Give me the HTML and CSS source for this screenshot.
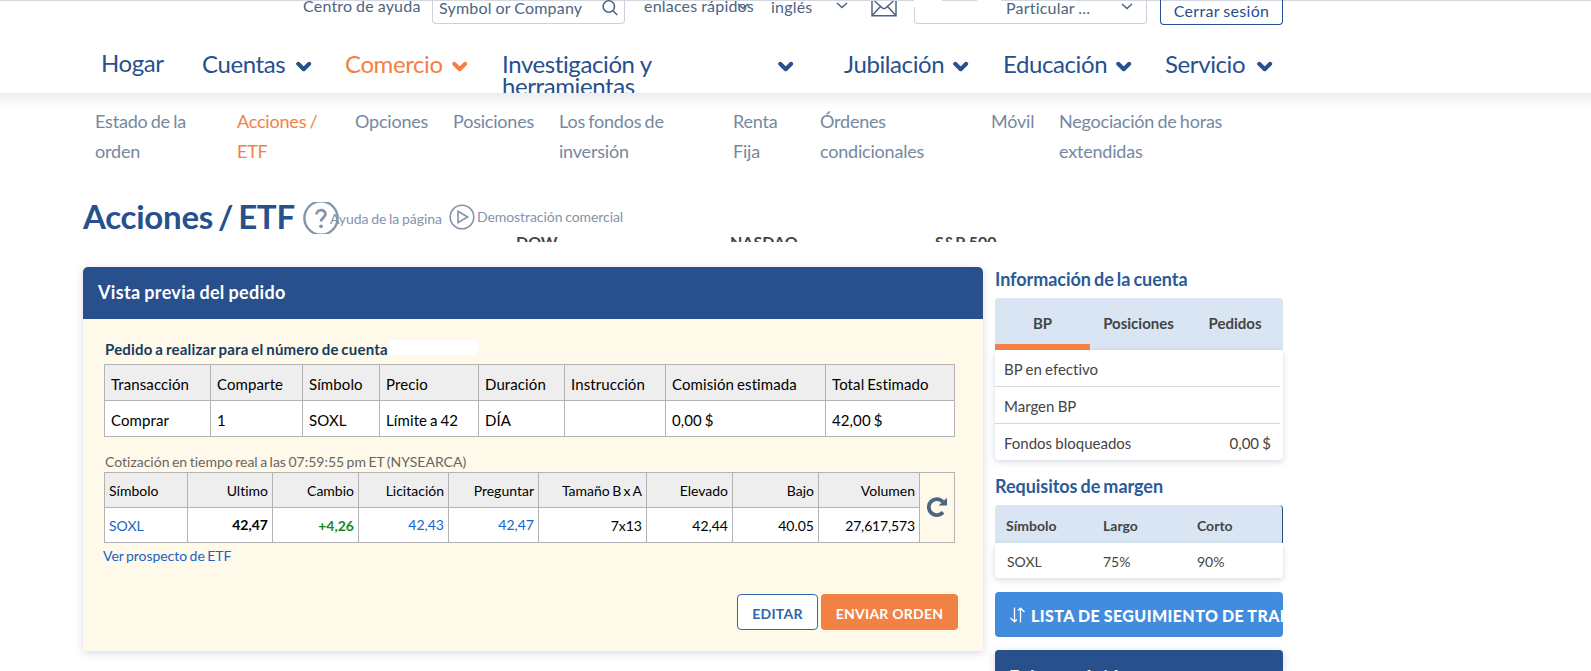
FILE: index.html
```html
<!DOCTYPE html>
<html lang="es">
<head>
    <meta charset="UTF-8">
    <meta name="viewport" content="width=device-width, initial-scale=1.0">
    <title>Acciones / ETF</title>
    <link rel="stylesheet" href="styles.css">
</head>
<body>
    <svg class="sprite">
        <symbol id="chevron" viewBox="0 0 16 11"><path d="M2.2 2.8 L7.7 8.2 L13.2 2.8" fill="none" stroke="currentColor" stroke-width="4" stroke-linecap="round" stroke-linejoin="round"/></symbol>
        <symbol id="chevron-thin" viewBox="0 0 12 7"><path d="M1 1 L6 5.6 L11 1" fill="none" stroke="currentColor" stroke-width="1.5"/></symbol>
    </svg>

    <header class="header">
        <div class="topbar">
            <a class="help-center">Centro de ayuda</a>
            <div class="search">
                <span>Symbol or Company</span>
                <svg class="icon-search" viewBox="0 0 16 16"><circle cx="6.8" cy="6.5" r="5.7"/><path d="M11 10.8 L15.2 15"/></svg>
            </div>
            <a class="quick">enlaces rápidos<svg class="thin quick-arrow"><use href="#chevron-thin"/></svg></a>
            <a class="lang">inglés</a>
            <svg class="thin lang-arrow"><use href="#chevron-thin"/></svg>
            <svg class="icon-mail" viewBox="0 0 26 17"><path d="M1 0 V14.8 H25 V0 M3.5 0 L12 7.5 H14 L22.5 0 M1 14.8 L9.5 5.5 M25 14.8 L16.5 5.5"/></svg>
            <div class="account">
                <span>Particular ...</span>
                <svg class="thin"><use href="#chevron-thin"/></svg>
            </div>
            <a class="logout">Cerrar sesión</a>
        </div>
        <nav class="nav">
            <a class="nav-home">Hogar</a>
            <a class="nav-accounts">Cuentas <svg><use href="#chevron"/></svg></a>
            <a class="nav-trade active">Comercio <svg><use href="#chevron"/></svg></a>
            <a class="nav-research"><span>Investigación y herramientas</span> <svg><use href="#chevron"/></svg></a>
            <a class="nav-retire">Jubilación <svg><use href="#chevron"/></svg></a>
            <a class="nav-edu">Educación <svg><use href="#chevron"/></svg></a>
            <a class="nav-service">Servicio <svg><use href="#chevron"/></svg></a>
        </nav>
    </header>

    <nav class="subnav">
        <a>Estado de la orden</a>
        <a class="active">Acciones / ETF</a>
        <a>Opciones</a>
        <a>Posiciones</a>
        <a>Los fondos de inversión</a>
        <a>Renta Fija</a>
        <a>Órdenes condicionales</a>
        <a>Móvil</a>
        <a>Negociación de horas extendidas</a>
    </nav>

    <div class="page-title">
        <h1>Acciones / ETF</h1>
        <svg class="icon-help" viewBox="0 0 36 32"><circle cx="18" cy="16" r="16.6" stroke-width="2.4"/><path d="M13.6 12.6 C13.6 6.6 22.4 6.8 22.4 12.2 C22.4 15.6 18 15.6 18 19.6" stroke-width="2.8"/><circle class="dot" cx="18" cy="24.3" r="1.9"/></svg>
        <a class="page-help">Ayuda de la página</a>
        <svg class="icon-play" viewBox="0 0 26 26"><circle cx="13" cy="13" r="11.8"/><path d="M9 7.3 L18.6 13 L9 18.7 Z"/></svg>
        <a class="page-demo">Demostración comercial</a>
    </div>
    <div class="ticker">
        <span>DOW</span>
        <span>NASDAQ</span>
        <span>S&amp;P 500</span>
    </div>

    <div class="content">
        <main class="panel">
            <h2>Vista previa del pedido</h2>
            <div class="panel-body">
                <p class="order-label">Pedido a realizar para el número de cuenta<span class="redacted"></span></p>
                <table class="order">
                    <colgroup><col class="w106"><col class="w92"><col class="w77"><col class="w99"><col class="w86"><col class="w101"><col class="w160"><col class="w129"></colgroup>
                    <tr><th>Transacción</th><th>Comparte</th><th>Símbolo</th><th>Precio</th><th>Duración</th><th>Instrucción</th><th>Comisión estimada</th><th>Total Estimado</th></tr>
                    <tr><td>Comprar</td><td>1</td><td>SOXL</td><td>Límite a 42</td><td>DÍA</td><td></td><td>0,00 $</td><td>42,00 $</td></tr>
                </table>
                <p class="quote-time">Cotización en tiempo real a las 07:59:55 pm ET (NYSEARCA)</p>
                <table class="quote">
                    <colgroup><col class="w83"><col class="w85"><col class="w86"><col class="w90"><col class="w90"><col class="w108"><col class="w86"><col class="w86"><col class="w101"><col class="w35"></colgroup>
                    <tr>
                        <th>Símbolo</th><th>Ultimo</th><th>Cambio</th><th>Licitación</th><th>Preguntar</th><th>Tamaño B x A</th><th>Elevado</th><th>Bajo</th><th>Volumen</th>
                        <td class="refresh" rowspan="2"><svg viewBox="0 0 20 20"><path class="arc" d="M16 15.2 A8 8 0 1 1 15.8 4.8"/><path class="tip" d="M20 0.8 V8.4 H11.6 Z"/></svg></td>
                    </tr>
                    <tr><td class="link">SOXL</td><td class="last">42,47</td><td class="up">+4,26</td><td class="link bid">42,43</td><td class="link bid">42,47</td><td>7x13</td><td>42,44</td><td>40.05</td><td class="volume">27,617,573</td></tr>
                </table>
                <a class="prospectus">Ver prospecto de ETF</a>
                <div class="actions">
                    <button class="btn-edit">EDITAR</button>
                    <button class="btn-send">ENVIAR ORDEN</button>
                </div>
            </div>
        </main>

        <aside class="sidebar">
            <h3>Información de la cuenta</h3>
            <div class="tabs">
                <a class="selected">BP</a>
                <a>Posiciones</a>
                <a>Pedidos</a>
            </div>
            <ul class="balances">
                <li>BP en efectivo</li>
                <li>Margen BP</li>
                <li>Fondos bloqueados <span>0,00 $</span></li>
            </ul>
            <h3>Requisitos de margen</h3>
            <div class="margin-head"><span>Símbolo</span><span>Largo</span><span>Corto</span></div>
            <div class="margin-row"><span>SOXL</span><span>75%</span><span>90%</span></div>
            <a class="watchlist">
                <svg viewBox="0 0 15 16"><path d="M4.5 0.5 V14.5 M0.5 11 L4.5 14.8 L7 12.5 M10.5 15.5 V1.5 M8 3.5 L10.5 1.2 L14.5 5"/></svg>
                <span>LISTA DE SEGUIMIENTO DE TRADING</span>
            </a>
            <div class="quick-links">Enlaces rápidos</div>
        </aside>
    </div>
</body>
</html>
```
FILE: styles.css
```css
* {
    box-sizing: border-box;
}
body {
    margin: 0;
    height: 671px;
    overflow: hidden;
    font-family: Lato, sans-serif;
    font-variant-ligatures: none;
    background-color: #fff;
    color: #000;
}
h1, h2, h3, p, ul {
    margin: 0;
    padding: 0;
}
.sprite {
    display: none;
}

/* header */
.header {
    height: 93px;
    overflow: hidden;
    padding-top: 1px;
    background-color: #fff;
    box-shadow: inset 0 1px #d5d7de;
}
.topbar {
    display: flex;
    align-items: flex-start;
    height: 43px;
    padding-left: 303px;
    font-size: 16px;
    line-height: 20px;
    letter-spacing: 0.2px;
    word-spacing: -0.5px;
    color: #4d6482;
    white-space: nowrap;
}
.help-center {
    width: 129px;
    margin-top: -5px;
}
.search {
    display: flex;
    justify-content: space-between;
    width: 193px;
    height: 26px;
    margin-top: -3px;
    padding: 0 6px;
    border: 1px solid #c9d3df;
    border-top: 0;
    border-radius: 0 0 4px 4px;
}
.icon-search {
    width: 16px;
    height: 16px;
    margin-top: 2px;
    fill: none;
    stroke: #4d6482;
    stroke-width: 1.6;
}
.thin {
    width: 12px;
    height: 7px;
}
.quick {
    position: relative;
    width: 146px;
    padding-left: 19px;
    margin-top: -5px;
}
.quick-arrow {
    position: absolute;
    left: 112px;
    top: 7px;
}
.lang {
    width: 65px;
    margin-top: -4px;
}
.lang-arrow {
    margin-top: 1px;
}
.icon-mail {
    width: 26px;
    height: 17px;
    margin-left: 23px;
    fill: none;
    stroke: #4d6482;
    stroke-width: 1.5;
}
.account {
    position: relative;
    display: flex;
    justify-content: space-between;
    width: 233px;
    height: 26px;
    margin: -3px 0 0 17px;
    padding: 0 13px 0 91px;
    border: 1px solid #c9d3df;
    border-top: 0;
    border-radius: 0 0 4px 4px;
}
.account::before,
.account::after {
    content: "";
    position: absolute;
    top: 2px;
    left: -1px;
    width: 28px;
    height: 7px;
    background-color: #fff;
}
.account::after {
    left: 62px;
    width: 24px;
    height: 2px;
}
.account .thin {
    margin-top: 5px;
}
.logout {
    width: 123px;
    height: 28px;
    margin: -4px 0 0 13px;
    padding-top: 4px;
    border: 1px solid #27508d;
    border-top: 0;
    border-radius: 0 0 4px 4px;
    text-align: center;
    letter-spacing: 0.3px;
    color: #27508d;
}
.nav {
    display: flex;
    align-items: flex-start;
    padding-left: 101px;
    padding-top: 9px;
    font-size: 24px;
    line-height: 22px;
    letter-spacing: -0.4px;
    color: #27508d;
    white-space: nowrap;
}
.nav a {
    display: flex;
    justify-content: space-between;
}
.nav svg {
    width: 16px;
    height: 11px;
    margin-top: 8px;
}
.nav .nav-home {
    width: 101px;
    margin-top: -1px;
}
.nav-accounts {
    width: 110px;
    margin-right: 33px;
}
.nav-trade {
    width: 123px;
    margin-right: 34px;
}
.nav-research {
    width: 292px;
    margin-right: 50px;
}
.nav-research span {
    width: 200px;
    white-space: normal;
}
.nav-retire {
    width: 125px;
    margin-right: 34px;
}
.nav-edu {
    width: 129px;
    margin-right: 33px;
}
.nav-service {
    width: 108px;
}
.active {
    color: #f47f45;
}

.subnav {
    display: grid;
    grid-template-columns: 142px 118px 98px 106px 174px 87px 171px 68px 180px;
    height: 98px;
    padding: 13px 0 0 95px;
    background: linear-gradient(#ecedf1, #fff 14px);
    font-size: 18px;
    line-height: 30px;
    letter-spacing: -0.2px;
    word-spacing: -1.2px;
    color: #76889e;
}
.subnav a {
    padding-right: 30px;
}
.subnav a:last-child,
.subnav a:nth-child(3),
.subnav a:nth-child(4) {
    padding-right: 0;
}
.subnav .active {
    color: #f47f45;
}

/* title row */
.page-title {
    display: flex;
    height: 46px;
    padding-left: 83px;
    color: #8394ab;
    font-size: 14px;
    line-height: 20px;
    letter-spacing: -0.07px;
    word-spacing: -0.7px;
    white-space: nowrap;
}
h1 {
    width: 220px;
    padding-top: 5px;
    font-size: 33px;
    line-height: 40px;
    font-weight: 700;
    letter-spacing: -0.25px;
    word-spacing: -2.8px;
    color: #27508d;
}
.icon-help {
    width: 36px;
    height: 32px;
    margin-top: 11px;
    fill: none;
    stroke: #8394ab;
}
.icon-help .dot {
    fill: #8394ab;
    stroke: none;
}
.page-help {
    width: 120px;
    margin-left: -9px;
    padding-top: 18px;
}
.icon-play {
    width: 26px;
    height: 26px;
    margin: 13px 0 0 -1px;
    fill: none;
    stroke: #8394ab;
    stroke-width: 1.6;
}
.page-demo {
    padding: 16px 0 0 2px;
}
.ticker {
    display: grid;
    grid-template-columns: 214px 205px 100px;
    height: 5px;
    overflow: hidden;
    padding-left: 516px;
    font-size: 16px;
    line-height: 10px;
    font-weight: 700;
    color: #444;
}

.content {
    display: flex;
    align-items: flex-start;
    gap: 12px;
    padding: 25px 0 0 83px;
}
.panel {
    width: 900px;
    height: 384px;
    border-radius: 5px 5px 0 0;
    background-color: #fff9e9;
    box-shadow: 0 2px 8px rgba(60, 70, 110, 0.2);
}
.panel h2 {
    height: 52px;
    padding-left: 15px;
    border-radius: 5px 5px 0 0;
    background-color: #27508d;
    color: #fff;
    font-size: 18px;
    line-height: 51px;
    letter-spacing: 0.32px;
    word-spacing: -0.8px;
}
.panel-body {
    padding: 20px 0 0 21px;
}
.order-label {
    display: flex;
    height: 25px;
    padding-left: 1px;
    font-size: 15px;
    line-height: 21px;
    font-weight: 700;
    letter-spacing: 0.2px;
    word-spacing: -1.1px;
    color: #173b60;
}
.redacted {
    width: 90px;
    height: 15px;
    margin: 1px 0 0 1px;
    border-radius: 0 8px 14px 0;
    background-color: #fff;
}
table {
    width: 851px;
    table-layout: fixed;
    border-collapse: collapse;
}
th, td {
    border: 1px solid #b3b3b3;
    font-weight: 400;
    text-align: left;
    background-color: #fff;
    white-space: nowrap;
}
th {
    background-color: #eee;
}
.order th, .order td {
    height: 36px;
    padding: 3px 0 0 6px;
    font-size: 15px;
    letter-spacing: 0.1px;
    word-spacing: -1px;
}
.quote-time {
    height: 35px;
    padding: 16px 0 0 1px;
    font-size: 14px;
    line-height: 18px;
    word-spacing: -1.1px;
    color: #666;
}
.quote th, .quote td {
    height: 35px;
    padding: 0 4px;
    font-size: 14px;
    text-align: right;
    word-spacing: -1.2px;
}
.quote th:first-child, .quote td:first-child {
    text-align: left;
}
.quote .last {
    font-weight: 700;
}
.quote .last, .quote .bid {
    padding-bottom: 2px;
}
.quote .up {
    font-weight: 700;
    color: #138a1f;
}
.quote .volume {
    letter-spacing: -0.15px;
}
.quote .link, .prospectus {
    color: #1565c8;
}
.quote .refresh {
    padding: 0 0 2px;
    text-align: center;
    vertical-align: middle;
    background-color: #fff9e9;
}
.refresh svg {
    display: block;
    width: 20px;
    height: 20px;
    margin: 0 auto;
}
.refresh .arc {
    fill: none;
    stroke: #4d6482;
    stroke-width: 3.8;
}
.refresh .tip {
    fill: #4d6482;
}
.w35 { width: 35px; }
.w77 { width: 77px; }
.w83 { width: 83px; }
.w85 { width: 85px; }
.w86 { width: 86px; }
.w90 { width: 90px; }
.w92 { width: 92px; }
.w99 { width: 99px; }
.w101 { width: 101px; }
.w106 { width: 106px; }
.w108 { width: 108px; }
.w129 { width: 129px; }
.w160 { width: 160px; }
.prospectus {
    display: block;
    margin: 3px 0 0 -1px;
    font-size: 14px;
    line-height: 20px;
    letter-spacing: -0.05px;
    word-spacing: -1px;
}
.actions {
    display: flex;
    justify-content: flex-end;
    gap: 3px;
    margin-top: 28px;
    padding-right: 25px;
}
button {
    height: 36px;
    padding: 3px 0 0;
    border-radius: 4px;
    font-family: Lato, sans-serif;
    font-size: 14px;
    font-weight: 700;
    letter-spacing: 0.25px;
}
.btn-edit {
    width: 81px;
    border: 1px solid #2f66ad;
    background-color: #fff;
    color: #2f66ad;
}
.btn-send {
    width: 137px;
    border: 0;
    background-color: #f28144;
    color: #fff;
}

/* right column */
.sidebar {
    width: 288px;
}
h3 {
    height: 31px;
    font-size: 18px;
    line-height: 25px;
    font-weight: 700;
    letter-spacing: -0.05px;
    word-spacing: -1.2px;
    color: #2a5a99;
}
.tabs {
    display: grid;
    grid-template-columns: 95px 97px 96px;
    grid-template-rows: 52px;
    height: 52px;
    border-radius: 4px 4px 0 0;
    background-color: #d9e5f3;
    font-size: 15px;
    font-weight: 700;
    line-height: 51px;
    text-align: center;
    color: #444;
}
.tabs .selected {
    border-bottom: 6px solid #f28144;
}
.balances {
    height: 110px;
    margin-bottom: 14px;
    padding-right: 3px;
    border-radius: 4px;
    box-shadow: 0 2px 6px rgba(60, 70, 110, 0.2);
    list-style: none;
    font-size: 15px;
    word-spacing: -0.6px;
    color: #444;
}
.balances li {
    display: flex;
    justify-content: space-between;
    height: 37px;
    padding: 0 9px;
    border-bottom: 1px solid #d6d6d6;
    line-height: 39px;
}
.balances li:last-child {
    border: 0;
}
.margin-head, .margin-row {
    display: grid;
    grid-template-columns: 97px 94px 90px;
    padding-left: 11px;
    font-size: 14px;
    color: #444;
}
.margin-head {
    height: 38px;
    border-right: 1px solid #27508d;
    border-radius: 4px 4px 0 0;
    background-color: #d9e5f3;
    font-weight: 700;
    line-height: 42px;
}
.margin-row {
    height: 35px;
    margin-bottom: 14px;
    padding-left: 12px;
    grid-template-columns: 96px 94px 90px;
    border-radius: 4px;
    box-shadow: 0 2px 6px rgba(60, 70, 110, 0.2);
    line-height: 38px;
}
.watchlist {
    display: flex;
    height: 45px;
    margin-bottom: 13px;
    padding-left: 15px;
    overflow: hidden;
    border-radius: 4px;
    background-color: #438bdd;
    color: #fff;
    font-size: 16px;
    font-weight: 900;
    line-height: 48px;
    letter-spacing: 0.4px;
    word-spacing: -0.5px;
    white-space: nowrap;
}
.watchlist svg {
    flex: none;
    width: 15px;
    height: 16px;
    margin: 15px 6px 0 0;
    fill: none;
    stroke: #fff;
    stroke-width: 1.3;
}
.quick-links {
    height: 21px;
    padding: 16px 0 0 14px;
    overflow: hidden;
    border-radius: 4px 4px 0 0;
    background-color: #27508d;
    color: #fff;
    font-size: 18px;
    line-height: 22px;
    font-weight: 700;
    letter-spacing: 0.35px;
    box-shadow: 0 2px 8px rgba(60, 70, 110, 0.2);
}
```
